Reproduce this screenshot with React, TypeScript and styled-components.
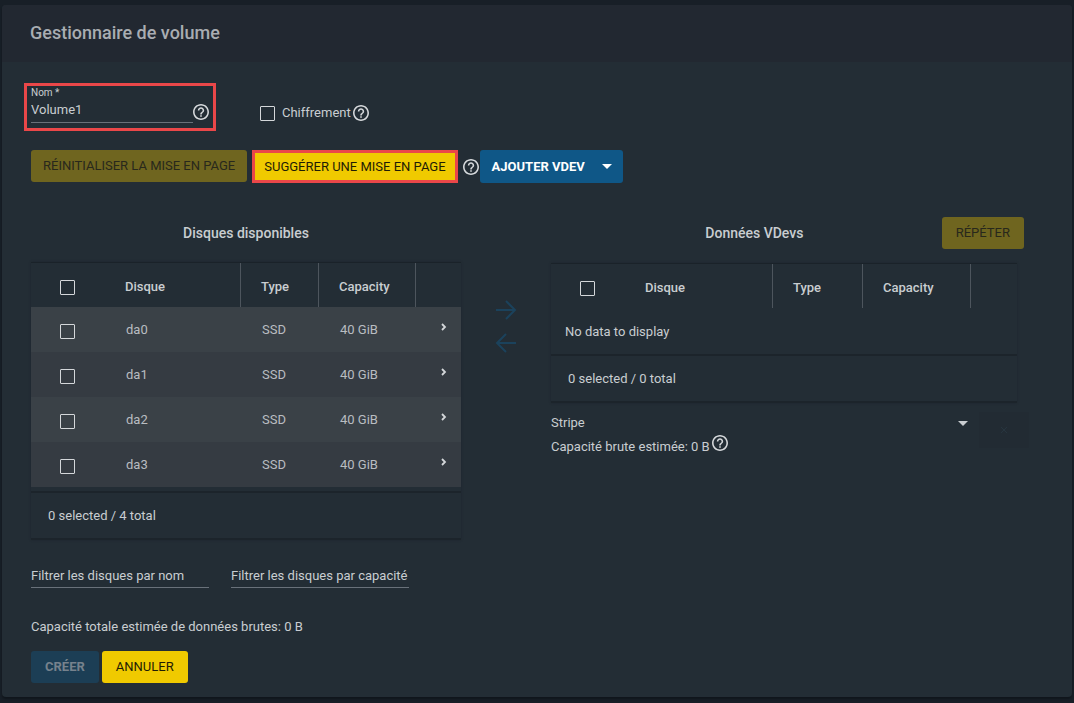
import React from "react";
import styled, { createGlobalStyle } from "styled-components";

const GlobalStyle = createGlobalStyle`
  *, *::before, *::after { box-sizing: border-box; }
  body {
    margin: 0;
    background: #181f27;
    color: #c9cdd1;
    font-family: Roboto, "Liberation Sans", sans-serif;
    font-size: 13px;
    line-height: 16px;
  }
  button, input, select { font: inherit; color: inherit; margin: 0; }
`;

const Page = styled.main`
  padding: 5px 2px 6px;
`;

const Card = styled.section`
  background: #232d35;
  border-radius: 4px;
  box-shadow: 0 2px 2px #10161c;
  overflow: hidden;
`;

const CardHeader = styled.header`
  display: flex;
  align-items: center;
  height: 57px;
  padding: 0 28px 2px;
  background: #222831;
`;

const CardTitle = styled.h1`
  margin: 0;
  font-size: 18px;
  line-height: 24px;
  font-weight: 500;
  color: #a9adb2;
`;

const CardBody = styled.form`
  padding: 21px 28px 14px 29px;
`;

const NameRow = styled.div`
  display: flex;
  align-items: center;
`;

const NameBox = styled.div`
  display: flex;
  align-items: flex-end;
  width: 192px;
  height: 48px;
  margin-left: -7px;
  padding: 0 0 5px 4px;
  border: 3px solid #ea4749;
`;

const NameField = styled.label`
  display: flex;
  flex-direction: column;
  width: 162px;
  font-size: 10px;
  line-height: 12px;
`;

const NameInput = styled.input`
  width: 100%;
  height: 24px;
  padding: 0 0 2px;
  border: 0;
  border-bottom: 1px solid #69717a;
  background: none;
  font-size: 13px;
  outline: none;
`;

const HelpButton = styled.button`
  display: flex;
  padding: 0;
  border: 0;
  background: none;
  color: #d4d7da;
`;

const FieldHelp = styled(HelpButton)`
  padding-bottom: 3px;
`;

const EncryptGroup = styled.div`
  display: flex;
  align-items: center;
  gap: 2px;
  margin: 12px 0 0 44px;
`;

const CheckLabel = styled.label`
  display: flex;
  align-items: center;
  gap: 7px;
`;

const Checkbox = styled.input.attrs({ type: "checkbox" })`
  appearance: none;
  display: block;
  flex: none;
  width: 15px;
  height: 15px;
  border: 1px solid #d4d7da;
  border-radius: 1px;
  background: transparent;
`;

const ButtonRow = styled.div<{ $top: number; $gap: number }>`
  display: flex;
  align-items: flex-start;
  gap: ${(p) => p.$gap}px;
  margin-top: ${(p) => p.$top}px;
`;

const tones = {
  accent: { bg: "#f0ca00", fg: "#1f1c05" },
  accentOff: { bg: "#6f651f", fg: "#28281c" },
  primary: { bg: "#0f5787", fg: "#ffffff" },
  primaryOff: { bg: "#1c3e55", fg: "#76828d" },
};

const Button = styled.button<{ $tone: keyof typeof tones; $strong?: boolean; $compact?: boolean }>`
  display: flex;
  align-items: center;
  height: 32px;
  padding: 0 ${(p) => (p.$compact ? 12 : 14)}px;
  border: 0;
  border-radius: 3px;
  background: ${(p) => tones[p.$tone].bg};
  color: ${(p) => tones[p.$tone].fg};
  font-weight: ${(p) => (p.$strong ? 700 : 400)};
  white-space: nowrap;
`;

const MarkedButton = styled(Button)`
  height: 33px;
  padding: 0 9px;
  border: 3px solid #ea4749;
  border-radius: 0;
`;

const MenuButton = styled(Button)`
  height: 33px;
  gap: 17px;
  padding: 0 11px 0 12px;
`;

const HelpMenuPair = styled.div`
  display: flex;
  align-items: center;
  gap: 1px;
`;

const Columns = styled.div`
  display: grid;
  grid-template-columns: minmax(0, 430fr) minmax(0, 90fr) minmax(0, 493fr);
  margin-top: 34px;
`;

const TitleRow = styled.div`
  display: flex;
  align-items: center;
  height: 32px;
`;

const SectionTitle = styled.h2<{ $inset?: number }>`
  flex: 1;
  margin: 0;
  padding-left: ${(p) => p.$inset || 0}px;
  font-size: 14px;
  font-weight: 500;
  text-align: center;
`;

const TableCard = styled.div<{ $top: number }>`
  margin-top: ${(p) => p.$top}px;
  border-top: 1px solid #1a2229;
  border-bottom: 2px solid #1c242b;
  box-shadow: 0 0 2px #1d252c;
`;

const Table = styled.table`
  width: 100%;
  border-collapse: separate;
  border-spacing: 0;
  table-layout: fixed;
`;

const HeadCell = styled.th<{ $line?: boolean }>`
  height: 44px;
  padding: 4px 0 0 20px;
  border-right: ${(p) => (p.$line ? "1px solid #4d555d" : "0")};
  font-weight: 500;
  text-align: left;
`;

const CheckHead = styled(HeadCell)`
  padding-left: 29px;
`;

const Row = styled.tr`
  background: #353b42;
  &:nth-child(odd) { background: #3a4147; }
`;

const Cell = styled.td`
  height: 45px;
  padding: 0 0 0 21px;
  color: #b9bdc1;
`;

const CheckCell = styled(Cell)`
  padding: 3px 0 0 29px;
`;

const ExpandButton = styled.button`
  display: flex;
  padding: 0 0 6px 3px;
  border: 0;
  background: none;
  color: #d4d7da;
`;

const EmptyCell = styled.td`
  height: 46px;
  padding: 1px 14px 0;
`;

const TableFooter = styled.div<{ $gap: number }>`
  margin-top: ${(p) => p.$gap}px;
  padding: 15px 17px 14px;
  border-top: 2px solid #1c242b;
`;

const MoveColumn = styled.div`
  display: flex;
  flex-direction: column;
  align-items: center;
  gap: 9px;
  padding-top: 81px;
`;

const MoveButton = styled.button`
  display: flex;
  padding: 0;
  border: 0;
  background: none;
  color: #1b425c;
`;

const VdevArea = styled.div`
  padding-right: 27px;
`;

const RepeatWrap = styled(TitleRow)`
  margin-right: 20px;
`;

const TypeRow = styled.div`
  display: flex;
  margin-top: 4px;
`;

const TypeMain = styled.div`
  flex: 1;
`;

const SelectWrap = styled.label`
  display: grid;
  grid-template-columns: 1fr auto;
  align-items: center;
  margin-top: 6px;
  padding-right: 11px;
`;

const Select = styled.select`
  appearance: none;
  height: 20px;
  padding: 0;
  border: 0;
  background: none;
  outline: none;
`;

const RawCapacity = styled.p`
  display: flex;
  align-items: center;
  gap: 2px;
  margin: 2px 0 0;
`;

const RaisedHelp = styled(HelpButton)`
  margin-bottom: 8px;
`;

const DeleteButton = styled.button`
  display: flex;
  align-items: center;
  justify-content: center;
  width: 50px;
  height: 36px;
  margin: 5px 15px 0 0;
  padding: 0;
  border: 0;
  background: #222b33;
  color: #27353f;
`;

const Filters = styled.div`
  display: flex;
  gap: 22px;
  margin-top: 24px;
`;

const FilterInput = styled.input`
  width: 178px;
  height: 24px;
  padding: 0;
  border: 0;
  border-bottom: 1px solid #69717a;
  background: none;
  outline: none;
  &::placeholder { color: #c9cdd1; opacity: 1; }
`;

const Total = styled.p`
  margin: 31px 0 0;
`;

const Help = () => (
  <svg width="16" height="16" viewBox="2 2 20 20" fill="currentColor" aria-hidden="true">
    <path d="M11 18h2v-2h-2v2zm1-16C6.48 2 2 6.48 2 12s4.48 10 10 10 10-4.48 10-10S17.52 2 12 2zm0 18c-4.41 0-8-3.59-8-8s3.59-8 8-8 8 3.59 8 8-3.59 8-8 8zm0-14c-2.21 0-4 1.79-4 4h2c0-1.1.9-2 2-2s2 .9 2 2c0 2-3 1.75-3 5h2c0-2.25 3-2.5 3-5 0-2.21-1.79-4-4-4z" />
  </svg>
);

const Caret = () => (
  <svg width="10" height="5" viewBox="0 0 10 5" fill="currentColor" aria-hidden="true">
    <path d="M0 0h10L5 5z" />
  </svg>
);

const Arrow = ({ back }: { back?: boolean }) => (
  <svg width="24" height="24" viewBox="0 0 24 24" fill="none" stroke="currentColor" strokeWidth="2" aria-hidden="true">
    <path d={back ? "M22 12H3M12 3l-9 9 9 9" : "M2 12h19M12 3l9 9-9 9"} />
  </svg>
);

const Chevron = () => (
  <svg width="8" height="8" viewBox="0 0 8 8" fill="none" stroke="currentColor" strokeWidth="1.8" aria-hidden="true">
    <path d="M2 1l3 3-3 3" />
  </svg>
);

const Cross = () => (
  <svg width="8" height="8" viewBox="0 0 8 8" stroke="currentColor" aria-hidden="true">
    <path d="M1 1l6 6M7 1L1 7" />
  </svg>
);

const disks = ["da0", "da1", "da2", "da3"];

const DiskTable = ({ widths, children }: { widths: number[]; children: React.ReactNode }) => {
  const total = widths.reduce((a, b) => a + b, 0);
  return (
    <Table>
      <colgroup>
        {widths.map((w, i) => (
          <col key={i} style={{ width: `${(w / total) * 100}%` }} />
        ))}
      </colgroup>
      <thead>
        <tr>
          <CheckHead><Checkbox aria-label="Tout sélectionner" /></CheckHead>
          <HeadCell $line>Disque</HeadCell>
          <HeadCell $line>Type</HeadCell>
          <HeadCell $line>Capacity</HeadCell>
          <HeadCell />
        </tr>
      </thead>
      <tbody>{children}</tbody>
    </Table>
  );
};

export default function App() {
  return (
    <>
      <GlobalStyle />
      <Page>
        <Card>
          <CardHeader>
            <CardTitle>Gestionnaire de volume</CardTitle>
          </CardHeader>
          <CardBody onSubmit={(e) => e.preventDefault()}>
            <NameRow>
              <NameBox>
                <NameField>
                  Nom *
                  <NameInput defaultValue="Volume1" />
                </NameField>
                <FieldHelp type="button" aria-label="Aide : nom"><Help /></FieldHelp>
              </NameBox>
              <EncryptGroup>
                <CheckLabel><Checkbox />Chiffrement</CheckLabel>
                <HelpButton type="button" aria-label="Aide : chiffrement"><Help /></HelpButton>
              </EncryptGroup>
            </NameRow>

            <ButtonRow $top={19} $gap={5}>
              <Button type="button" $tone="accentOff" $compact disabled>RÉINITIALISER LA MISE EN PAGE</Button>
              <MarkedButton type="button" $tone="accent">SUGGÉRER UNE MISE EN PAGE</MarkedButton>
              <HelpMenuPair>
                <HelpButton type="button" aria-label="Aide : mise en page"><Help /></HelpButton>
                <MenuButton type="button" $tone="primary" $strong aria-haspopup="menu">AJOUTER VDEV<Caret /></MenuButton>
              </HelpMenuPair>
            </ButtonRow>

            <Columns>
              <div>
                <TitleRow><SectionTitle>Disques disponibles</SectionTitle></TitleRow>
                <TableCard $top={13}>
                  <DiskTable widths={[74, 136, 78, 97, 45]}>
                    {disks.map((d) => (
                      <Row key={d}>
                        <CheckCell><Checkbox aria-label={d} /></CheckCell>
                        <Cell>{d}</Cell>
                        <Cell>SSD</Cell>
                        <Cell>40 GiB</Cell>
                        <Cell>
                          <ExpandButton type="button" aria-label={`Détails ${d}`}><Chevron /></ExpandButton>
                        </Cell>
                      </Row>
                    ))}
                  </DiskTable>
                  <TableFooter $gap={4}>0 selected / 4 total</TableFooter>
                </TableCard>
              </div>

              <MoveColumn>
                <MoveButton type="button" disabled aria-label="Ajouter"><Arrow /></MoveButton>
                <MoveButton type="button" disabled aria-label="Retirer"><Arrow back /></MoveButton>
              </MoveColumn>

              <div>
                <RepeatWrap>
                  <SectionTitle $inset={16}>Données VDevs</SectionTitle>
                  <Button type="button" $tone="accentOff" disabled>RÉPÉTER</Button>
                </RepeatWrap>
                <VdevArea>
                  <TableCard $top={14}>
                    <DiskTable widths={[74, 148, 90, 108, 46]}>
                      <tr><EmptyCell colSpan={5}>No data to display</EmptyCell></tr>
                    </DiskTable>
                    <TableFooter $gap={0}>0 selected / 0 total</TableFooter>
                  </TableCard>
                </VdevArea>
                <TypeRow>
                  <TypeMain>
                    <SelectWrap>
                      <Select aria-label="Type de VDev" defaultValue="stripe">
                        <option value="stripe">Stripe</option>
                      </Select>
                      <Caret />
                    </SelectWrap>
                    <RawCapacity>
                      Capacité brute estimée: 0 B
                      <RaisedHelp type="button" aria-label="Aide : capacité brute"><Help /></RaisedHelp>
                    </RawCapacity>
                  </TypeMain>
                  <DeleteButton type="button" disabled aria-label="Supprimer"><Cross /></DeleteButton>
                </TypeRow>
              </div>
            </Columns>

            <Filters>
              <FilterInput placeholder="Filtrer les disques par nom" aria-label="Filtrer les disques par nom" />
              <FilterInput placeholder="Filtrer les disques par capacité" aria-label="Filtrer les disques par capacité" />
            </Filters>

            <Total>Capacité totale estimée de données brutes: 0 B</Total>

            <ButtonRow $top={16} $gap={3}>
              <Button type="submit" $tone="primaryOff" $strong disabled>CRÉER</Button>
              <Button type="button" $tone="accent">ANNULER</Button>
            </ButtonRow>
          </CardBody>
        </Card>
      </Page>
    </>
  );
}
